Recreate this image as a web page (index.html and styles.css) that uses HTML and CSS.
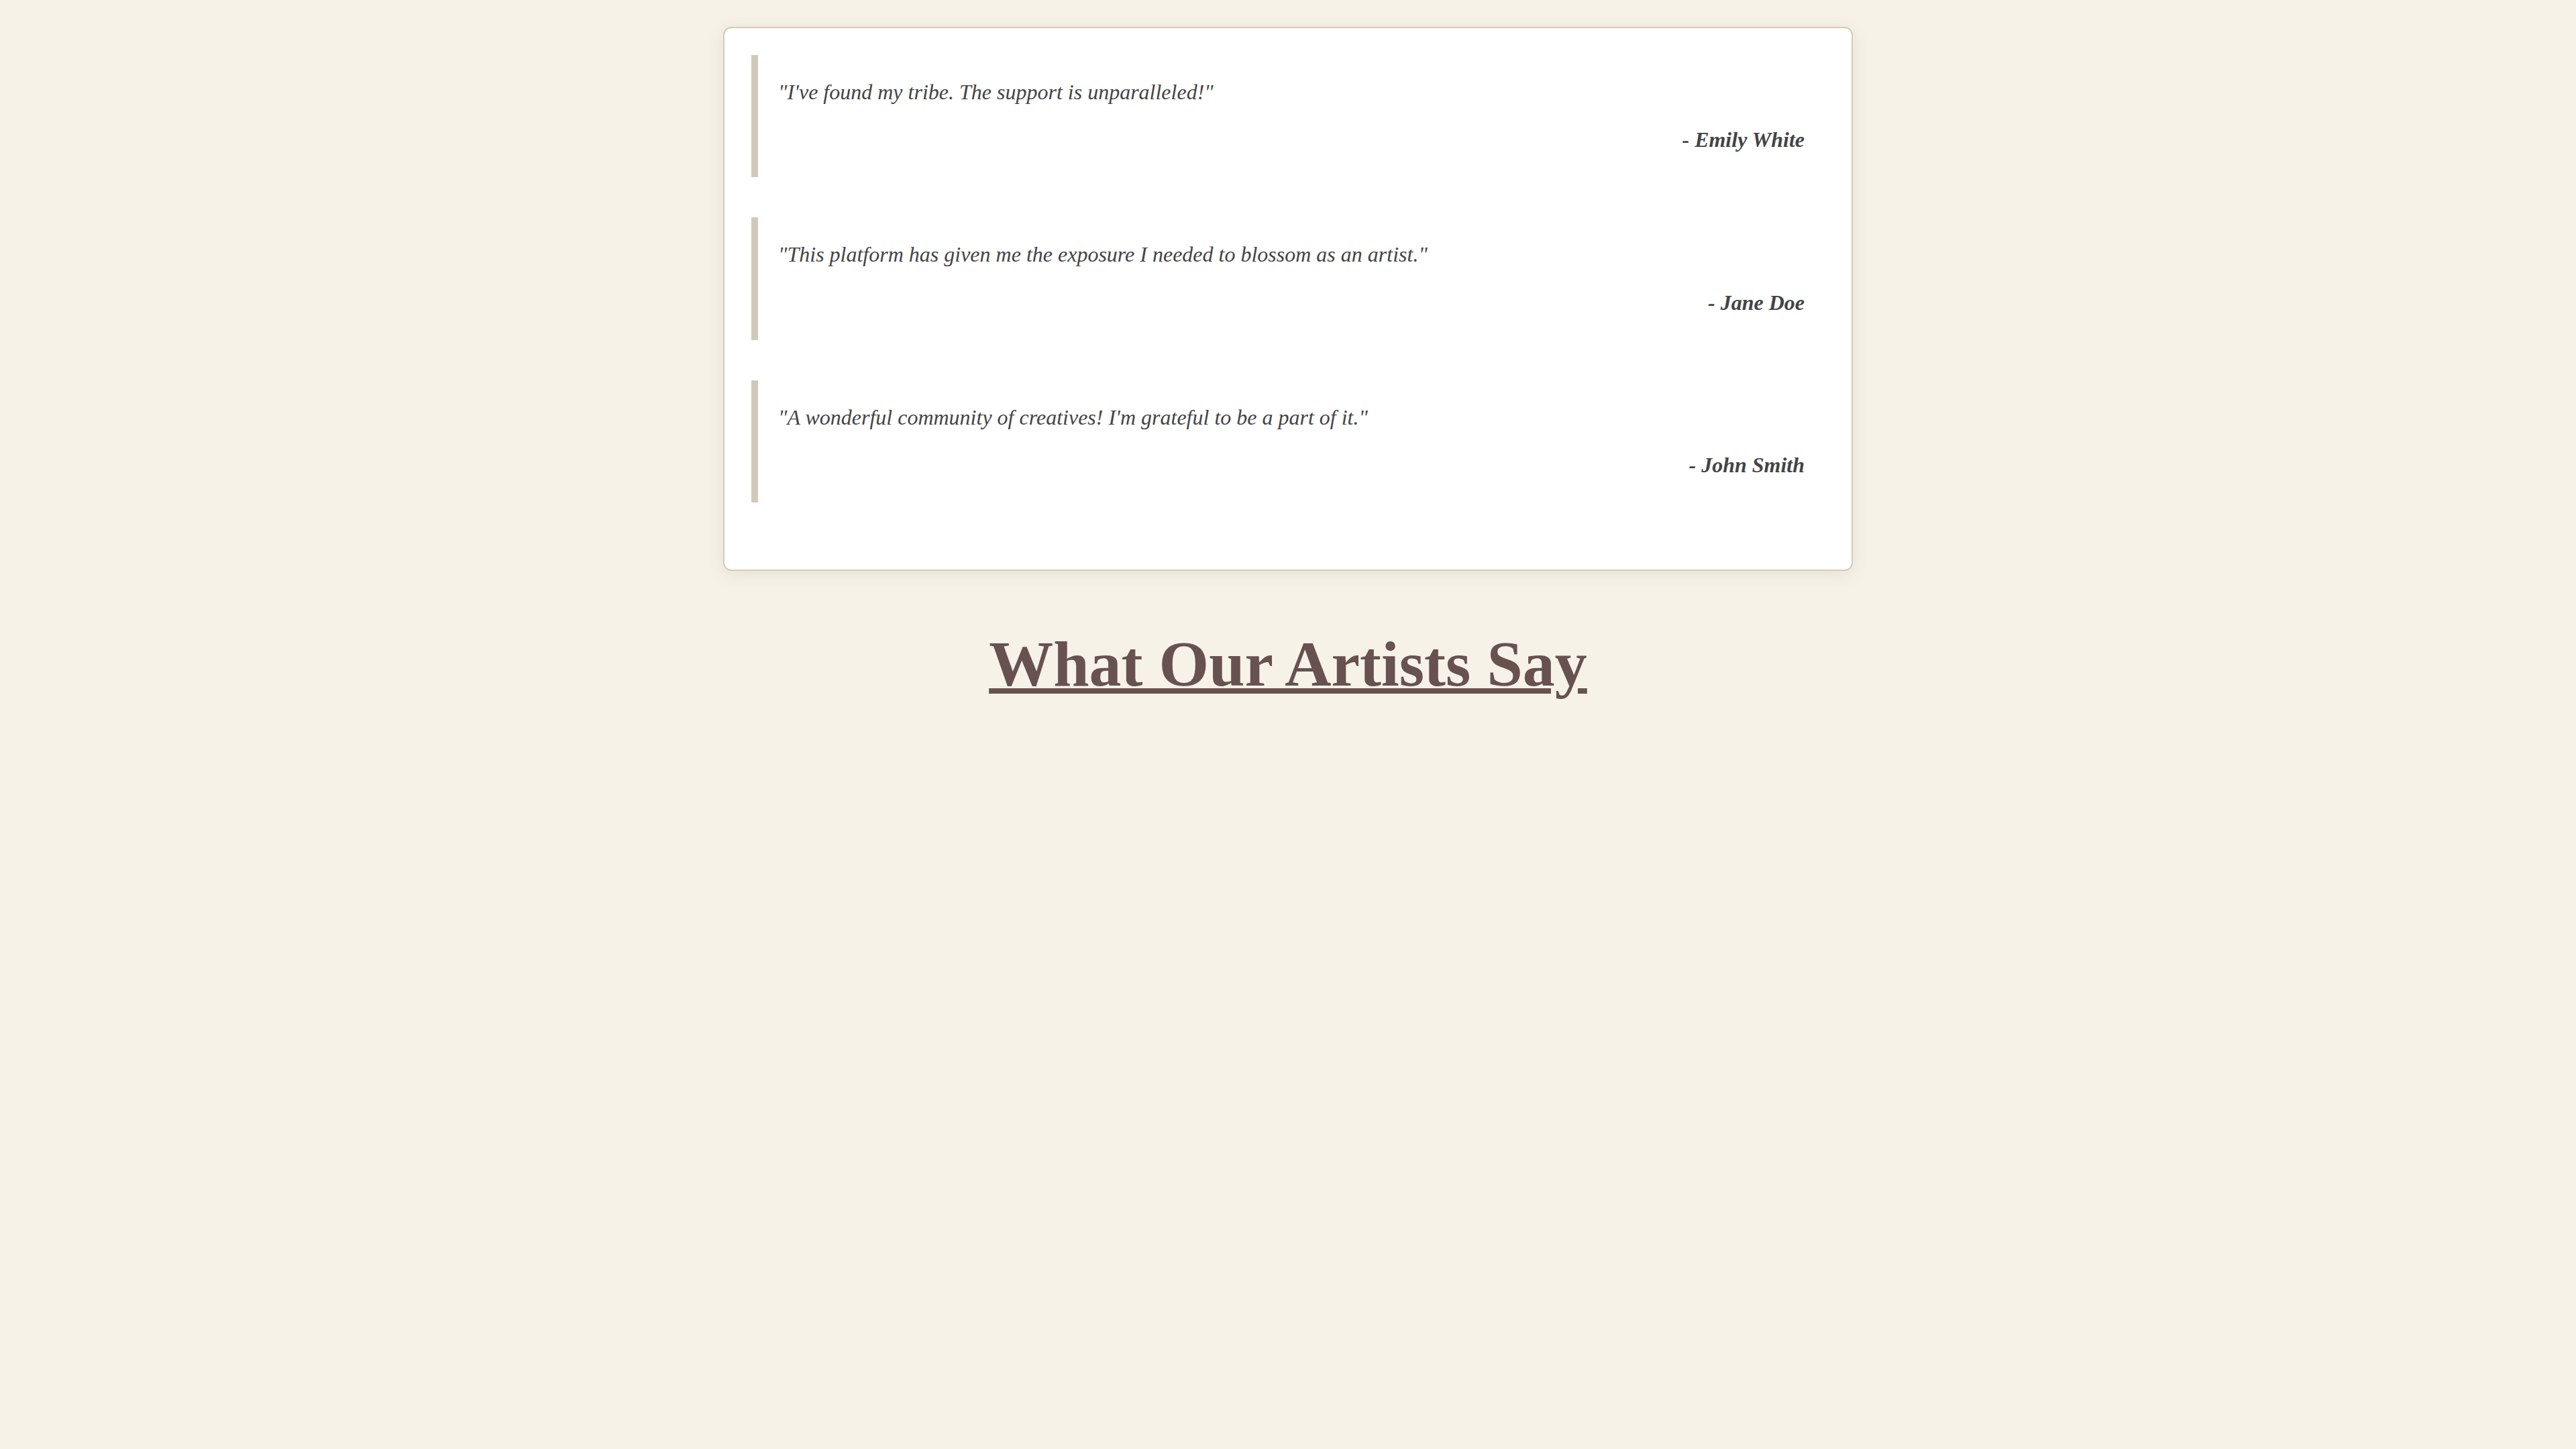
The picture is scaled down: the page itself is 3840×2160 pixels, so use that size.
FILE: index.html
```html
<!DOCTYPE html>
<html lang="en">
<head>
<meta charset="utf-8">
<title>What Our Artists Say</title>
<link rel="stylesheet" href="styles.css">
</head>
<body>
<main class="page">
  <section class="card">
    <blockquote class="testimonial">
      <p class="quote">"I've found my tribe. The support is unparalleled!"</p>
      <p class="author">- Emily White</p>
    </blockquote>
    <blockquote class="testimonial">
      <p class="quote">"This platform has given me the exposure I needed to blossom as an artist."</p>
      <p class="author">- Jane Doe</p>
    </blockquote>
    <blockquote class="testimonial">
      <p class="quote">"A wonderful community of creatives! I'm grateful to be a part of it."</p>
      <p class="author">- John Smith</p>
    </blockquote>
  </section>
  <h2 class="title">What Our Artists Say</h2>
</main>
</body>
</html>
```

FILE: styles.css
```css
html, body {
  margin: 0;
  padding: 0;
}

body {
  background: #f6f2e8;
  font-family: "Liberation Serif", "Times New Roman", serif;
  color: #444444;
}

.page {
  padding: 40px 0;
}

.card {
  max-width: 1600px;
  margin: 0 auto;
  padding: 40px;
  background: #ffffff;
  border: 2px solid #d4cbba;
  border-radius: 12px;
  box-shadow: 0 4px 24px rgba(120, 100, 60, 0.12);
}

.testimonial {
  margin: 0 0 60px;
  padding: 30px;
  border-left: 10px solid #d1c9b8;
}

.quote {
  margin: 0 0 20px;
  font-size: 32px;
  line-height: 1.6;
  font-style: italic;
  color: #444444;
}

.author {
  margin: 0;
  font-size: 32px;
  line-height: 1.6;
  font-style: italic;
  font-weight: bold;
  text-align: right;
  color: #444444;
}

.title {
  margin: 83px 0 0;
  font-size: 96px;
  font-weight: bold;
  line-height: normal;
  text-align: center;
  color: #67524f;
  text-decoration: underline;
  text-decoration-thickness: 8px;
}
```
